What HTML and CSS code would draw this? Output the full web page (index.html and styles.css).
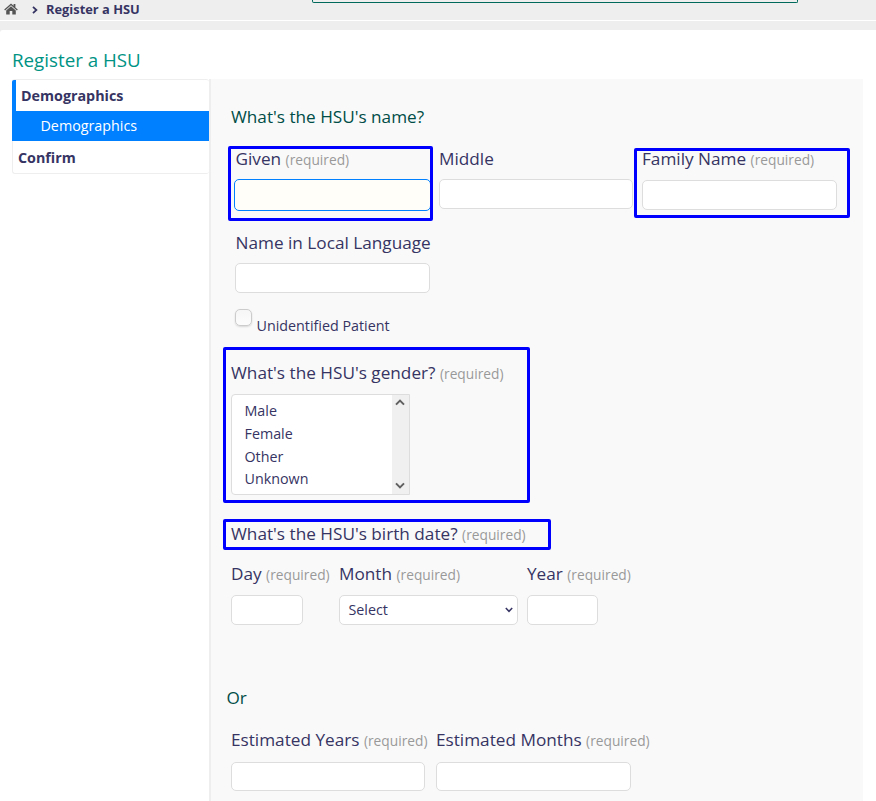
FILE: index.html
```html
<!DOCTYPE html>
<html lang="en">
<head>
<meta charset="utf-8">
<title>Register a HSU</title>
<link rel="stylesheet" href="styles.css">
</head>
<body>
<header class="topbar">
  <nav class="breadcrumbs">
    <svg class="home" viewBox="0 0 14 12" width="14" height="12"><path fill="#555" d="M7 0.4 L9.6 2.8 V1 H11.4 V4.4 L13.8 6.6 L12.9 7.5 L7 2.3 L1.1 7.5 L0.2 6.6Z M7 3.3 L11.8 7.5 V11.6 H8.3 V8 H5.7 V11.6 H2.2 V7.5Z"/></svg>
    <svg class="chevron" viewBox="0 0 6 8" width="6" height="8"><path fill="none" stroke="#363463" stroke-width="1.8" d="M1 0.8 L4.4 4 L1 7.2"/></svg>
    <b class="crumb">Register a HSU</b>
  </nav>
  <div class="search-edge"></div>
</header>
<div class="topbar-foot"></div>
<main class="page">
  <h2 class="title">Register a HSU</h2>
  <div class="columns">
    <ul class="steps">
      <li class="step active">Demographics</li>
      <li class="substep">Demographics</li>
      <li class="step last">Confirm</li>
    </ul>
    <form class="panel">
      <h3 class="heading">What's the HSU's name?</h3>
      <div class="names">
        <div class="field given">
          <label>Given <small>(required)</small></label>
          <input class="focused" type="text">
          <i class="mark"></i>
        </div>
        <div class="field middle">
          <label>Middle</label>
          <input type="text">
        </div>
        <div class="field family">
          <label>Family Name <small>(required)</small></label>
          <input type="text">
          <i class="mark"></i>
        </div>
      </div>
      <div class="field local">
        <label>Name in Local Language</label>
        <input type="text">
      </div>
      <div class="unidentified"><span class="check"></span><span class="check-text">Unidentified Patient</span></div>
      <div class="field gender">
        <label class="q-gender">What's the HSU's gender? <small>(required)</small></label>
        <div class="listbox">
          <ul class="options"><li>Male</li><li>Female</li><li>Other</li><li>Unknown</li></ul>
          <div class="scroll">
            <svg viewBox="0 0 10 7" width="10" height="7"><path d="M1 5.6 L5 1.6 L9 5.6"/></svg>
            <svg viewBox="0 0 10 7" width="10" height="7"><path d="M1 1.4 L5 5.4 L9 1.4"/></svg>
          </div>
        </div>
        <i class="mark"></i>
      </div>
      <div class="birth">
        <label class="q-birth">What's the HSU's birth date? <small>(required)</small></label>
        <i class="mark"></i>
      </div>
      <div class="dates">
        <div class="field day"><label>Day <small>(required)</small></label><input type="text"></div>
        <div class="field month"><label>Month <small>(required)</small></label>
          <div class="select"><span>Select</span><svg viewBox="0 0 8 6" width="8" height="6"><path d="M0.8 1 L4 4.3 L7.2 1" fill="none" stroke="#363463" stroke-width="1.5"/></svg></div>
        </div>
        <div class="field year"><label>Year <small>(required)</small></label><input type="text"></div>
      </div>
      <h3 class="heading or">Or</h3>
      <div class="estimates">
        <div class="field years"><label>Estimated Years <small>(required)</small></label><input type="text"></div>
        <div class="field months"><label>Estimated Months <small>(required)</small></label><input type="text"></div>
      </div>
    </form>
  </div>
</main>
</body>
</html>
```
FILE: styles.css
```css
* { box-sizing: border-box; }
html { height: 801px; overflow: hidden; }
body { margin: 0; height: 801px; overflow: hidden; background: #eee; color: #363463; font-family: "Open Sans", sans-serif; font-size: 17.2px; }
ul, h2, h3, form { margin: 0; padding: 0; list-style: none; }
.topbar { display: flex; height: 20px; }
.breadcrumbs { display: flex; align-items: flex-start; width: 312px; padding-left: 4px; }
.home { margin-top: 2.5px; }
.chevron { margin: 6px 0 0 14px; }
.crumb { margin-left: 8px; font-size: 12.87px; line-height: 18px; white-space: nowrap; }
.search-edge { width: 486px; height: 3px; border: solid #00695c; border-width: 0 1px 1px; border-radius: 0 0 2px 2px; }
.topbar-foot { height: 10px; border-top: 1px solid #fff; }
.page { height: 771px; padding: 16px 13px 0 12px; background: #fff; border-top-left-radius: 3px; }
.title { height: 33px; font-size: 18.75px; font-weight: 400; line-height: 28px; color: #009384; }
.columns { display: flex; height: 722px; }
.steps { width: 197px; height: 95px; border: 1px solid #eee; border-right: 0; border-radius: 3px; font-size: 14.3px; }
.step { height: 32px; padding-left: 5px; font-weight: 700; line-height: 33px; }
.step.active { height: 31px; margin-left: -1px; border-left: 4px solid #007fff; border-top-left-radius: 2px; line-height: 31px; }
.substep { height: 30px; margin-left: -1px; padding-left: 28.5px; background: #007fff; color: #fff; line-height: 29px; }
.panel { flex: 1; padding: 26px 0 0 20px; background: #f9f9f9; border-left: 2px solid #eee; }
.heading { height: 24px; font-size: 17.16px; font-weight: 400; line-height: 24px; color: #004d47; }
label { display: block; height: 24px; line-height: 24px; white-space: nowrap; }
small { font-size: 13.75px; color: #999; }
input { display: block; width: 195px; height: 30px; margin: 9px 0 0; padding: 0 8px; border: 1px solid #ddd; border-radius: 5px; background: #fff; outline: 0; }
.field, .birth { position: relative; }
.mark { position: absolute; border: 3px solid #00f; border-radius: 2px; pointer-events: none; }
.names { display: flex; margin-top: 18px; height: 84px; }
.given { width: 204px; padding-left: 3px; }
.given label { padding-left: 1.5px; }
.given .focused { width: 197px; height: 32px; margin-top: 8px; border-color: #007fff; background: #fffef8; }
.given .mark { left: -3px; top: -1px; width: 205px; height: 75px; }
.middle { width: 203px; padding-left: 4px; }
.middle input { width: 194px; margin-top: 8px; }
.family { padding-left: 4px; }
.family .mark { left: -4px; top: 1px; width: 216px; height: 70px; }
.local { margin-left: 4px; height: 62px; }
.local label { padding-left: 0.5px; }
.local input { margin-top: 8px; }
.unidentified { display: flex; height: 45px; padding: 16px 0 0 4px; }
.check { width: 17px; height: 17px; border: 1px solid #ccc; border-radius: 5px; background: linear-gradient(#f6f6f6, #fcfcfc); box-shadow: 0 1px 2px #0002; }
.check-text { margin: 5px 0 0 4.5px; font-size: 14.3px; line-height: 24px; }
.gender { height: 184px; padding-top: 23px; }
.listbox { display: flex; width: 179px; height: 101px; margin-top: 9px; border: 1px solid #ddd; border-radius: 4px 0 0 4px; background: #fff; }
.options { flex: 1; padding: 5px 0 0 12.5px; font-size: 14.3px; line-height: 22.8px; }
.scroll { display: flex; flex-direction: column; justify-content: space-between; align-items: center; width: 17px; padding: 4px 0 5px; background: #f0f0f0; }
.scroll svg { margin-right: 1px; }
.scroll path { fill: none; stroke: #606060; stroke-width: 2; }
.gender .mark { left: -8px; top: 9px; width: 307px; height: 156px; }
.birth { height: 40px; }
.birth .mark { left: -8px; top: -3px; width: 328px; height: 31px; }
.dates { display: flex; height: 124px; }
.day { width: 108px; }
.day input { width: 72px; }
.month { width: 188px; }
.year input { width: 71px; }
.select { display: flex; justify-content: space-between; align-items: center; width: 179px; height: 30px; margin-top: 9px; padding: 0 4px 2px 8.5px; border: 1px solid #ddd; border-radius: 5px; background: #fff; font-size: 14.3px; }
.select svg { margin-top: 2px; }
.or { margin-left: -4.5px; }
.estimates { display: flex; margin-top: 18px; }
.years { width: 205px; }
.estimates input { height: 29px; margin-top: 10px; }
.years input { width: 194px; }
```
